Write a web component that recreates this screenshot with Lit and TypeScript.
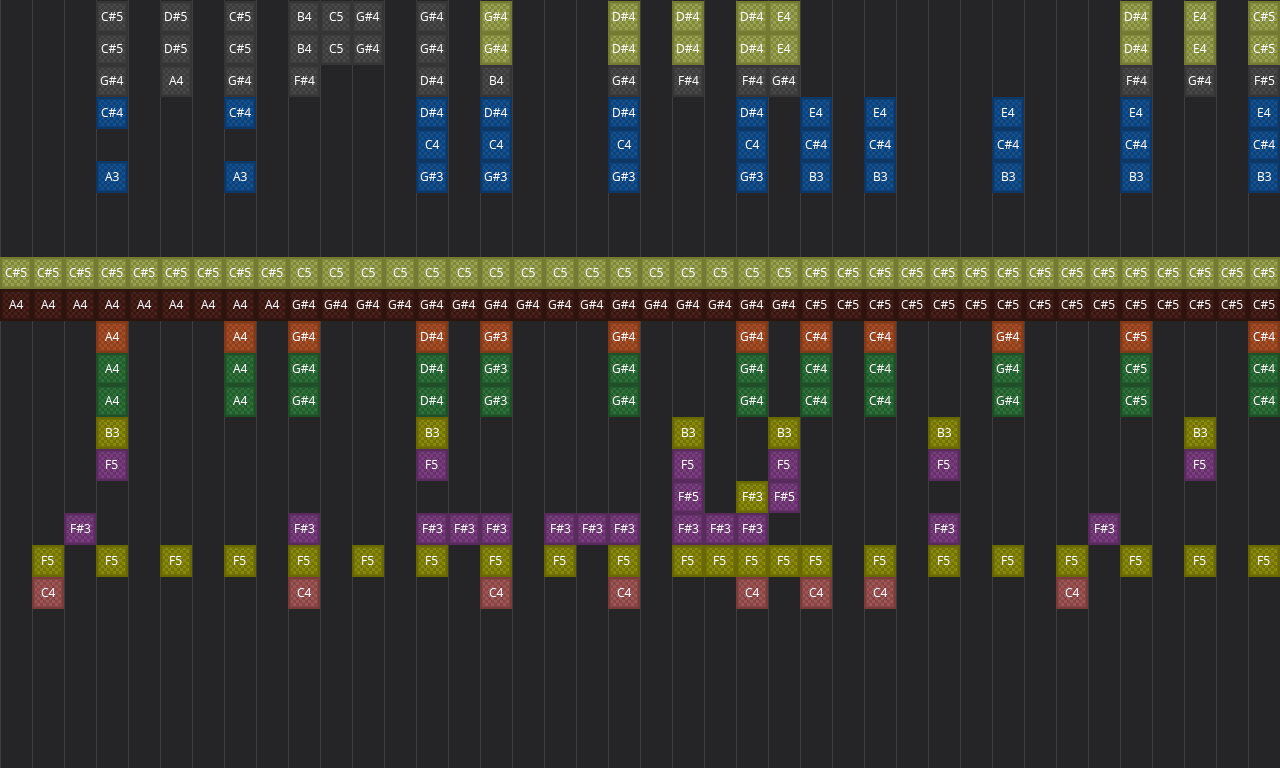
import { LitElement, html, css } from "lit";
import { customElement } from "lit/decorators.js";

const same = (cols: number[], n: string): [number, string][] => cols.map((c) => [c, n] as [number, string]);
const rng = (a: number, b: number) => Array.from({ length: b - a + 1 }, (_, i) => a + i);

const top1: [number, string, string][] = [
  [3, "C#5", "gray"], [5, "D#5", "gray"], [7, "C#5", "gray"], [9, "B4", "gray"], [10, "C5", "gray"], [11, "G#4", "gray"], [13, "G#4", "gray"],
  [15, "G#4", "lime"], [19, "D#4", "lime"], [21, "D#4", "lime"], [23, "D#4", "lime"], [24, "E4", "lime"], [35, "D#4", "lime"], [37, "E4", "lime"], [39, "C#5", "lime"],
];
const line = (r: number, list: [number, string, string][]) => list.map(([c, n, k]) => ({ r, c, n, k }));
const uni = (r: number, k: string, notes: [number, string][]) => notes.map(([c, n]) => ({ r, c, n, k }));
const brass: [number, string][] = [[3, "A4"], [7, "A4"], [9, "G#4"], [13, "D#4"], [15, "G#3"], [19, "G#4"], [23, "G#4"], [25, "C#4"], [27, "C#4"], [31, "G#4"], [35, "C#5"], [39, "C#4"]];

const NOTES = [
  ...line(0, top1),
  ...line(1, top1),
  ...uni(2, "gray", [[3, "G#4"], [5, "A4"], [7, "G#4"], [9, "F#4"], [13, "D#4"], [15, "B4"], [19, "G#4"], [21, "F#4"], [23, "F#4"], [24, "G#4"], [35, "F#4"], [37, "G#4"], [39, "F#5"]]),
  ...uni(3, "blue", [[3, "C#4"], [7, "C#4"], [13, "D#4"], [15, "D#4"], [19, "D#4"], [23, "D#4"], [25, "E4"], [27, "E4"], [31, "E4"], [35, "E4"], [39, "E4"]]),
  ...uni(4, "blue", [[13, "C4"], [15, "C4"], [19, "C4"], [23, "C4"], [25, "C#4"], [27, "C#4"], [31, "C#4"], [35, "C#4"], [39, "C#4"]]),
  ...uni(5, "blue", [[3, "A3"], [7, "A3"], [13, "G#3"], [15, "G#3"], [19, "G#3"], [23, "G#3"], [25, "B3"], [27, "B3"], [31, "B3"], [35, "B3"], [39, "B3"]]),
  ...uni(8, "lime", [...same(rng(0, 8), "C#5"), ...same(rng(9, 24), "C5"), ...same(rng(25, 39), "C#5")]),
  ...uni(9, "maroon", [...same(rng(0, 8), "A4"), ...same(rng(9, 24), "G#4"), ...same(rng(25, 39), "C#5")]),
  ...uni(10, "orange", brass),
  ...uni(11, "green", brass),
  ...uni(12, "green", brass),
  ...uni(13, "olive", same([3, 13, 21, 24, 29, 37], "B3")),
  ...uni(14, "purple", same([3, 13, 21, 24, 29, 37], "F5")),
  ...uni(15, "purple", [[21, "F#5"], [24, "F#5"]]),
  ...uni(15, "olive", [[23, "F#3"]]),
  ...uni(16, "purple", same([2, 9, 13, 14, 15, 17, 18, 19, 21, 22, 23, 29, 34], "F#3")),
  ...uni(17, "olive", same([1, 3, 5, 7, 9, 11, 13, 15, 17, 19, 21, 22, 23, 24, 25, 27, 29, 31, 33, 35, 37, 39], "F5")),
  ...uni(18, "red", same([1, 9, 15, 19, 23, 25, 27, 33], "C4")),
];

@customElement("app-root")
export class AppRoot extends LitElement {
  static styles = css`
    :host { display: block; width: 1280px; height: 768px; overflow: hidden; background: #252527; }
    .grid {
      display: grid;
      grid-template-columns: repeat(40, 32px);
      grid-auto-rows: 32px;
      padding-top: 1px;
      height: 767px;
      background-image: linear-gradient(to right, #3f3f41 1px, transparent 1px);
      background-size: 32px 32px;
    }
    .note {
      box-sizing: border-box;
      display: flex;
      align-items: center;
      justify-content: center;
      border: 2px solid var(--edge);
      outline: 1px solid var(--b);
      outline-offset: -3px;
      background-color: var(--a);
      background-image: repeating-conic-gradient(var(--a) 0 25%, var(--b) 0 50%);
      background-size: 6px 6px;
      background-origin: padding-box;
      font: 400 12px/1 "Open Sans", sans-serif;
      color: #fff;
      white-space: nowrap;
    }
    .note span { will-change: transform; }
    .gray { --edge: #353535; --a: #484848; --b: #3c3c3c; }
    .lime { --edge: #747a32; --a: #97a150; --b: #7f883c; }
    .blue { --edge: #0d3865; --a: #135090; --b: #0e4177; }
    .maroon { --edge: #2e120e; --a: #46211a; --b: #371612; }
    .orange { --edge: #803a19; --a: #a64d26; --b: #8d401e; }
    .green { --edge: #1e4f27; --a: #2d7038; --b: #235c2e; }
    .olive { --edge: #686804; --a: #8a8a0a; --b: #727207; }
    .purple { --edge: #592a5c; --a: #7a3e7e; --b: #65316a; }
    .red { --edge: #793c3c; --a: #a05555; --b: #874646; }
  `;
  render() {
    return html`<div class="grid">
      ${NOTES.map(
        (x) => html`<div class="note ${x.k}" style="grid-row:${x.r + 1};grid-column:${x.c + 1}"><span>${x.n}</span></div>`
      )}
    </div>`;
  }
}
